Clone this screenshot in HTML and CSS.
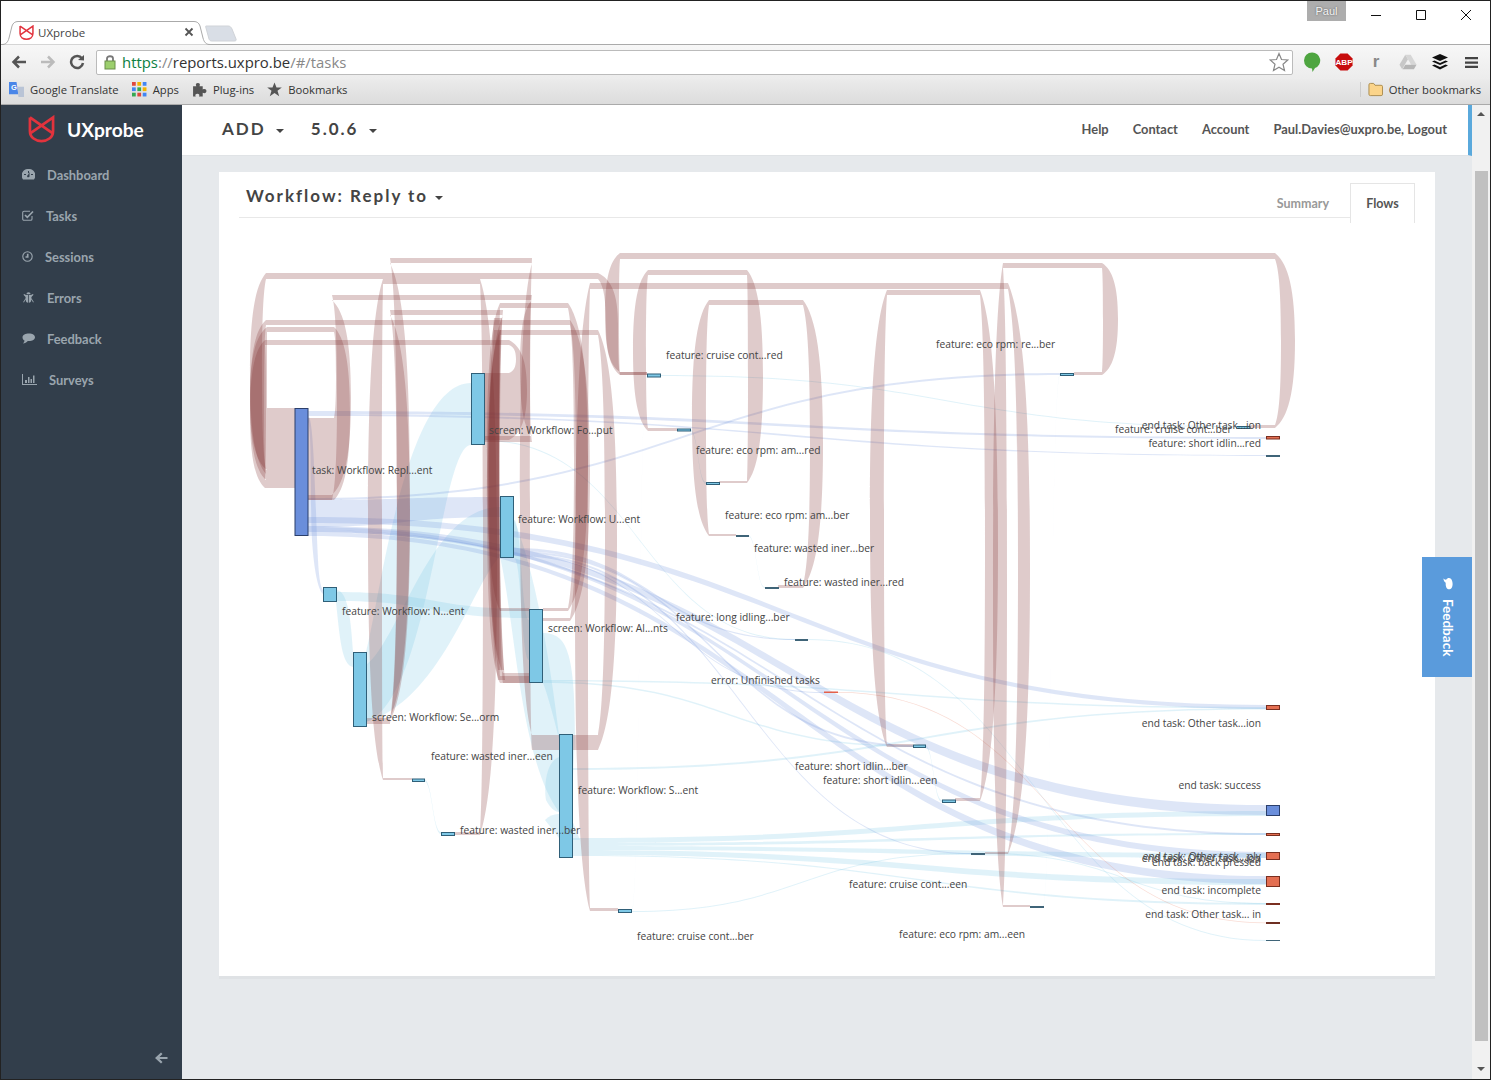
FILE: index.html
```html
<!DOCTYPE html>
<html lang="en">
  <head>
    <meta charset="UTF-8" />
    <title>UXprobe</title>
    <link rel="stylesheet" href="styles.css">
  </head>
  <body>
    <!-- browser frame -->
    <div class="titlebar">
      <div class="tab">
        <svg class="tab-shape" viewBox="0 0 208 24"><path d="M0 23.500C4 23.500 6 21 7 17L10 5C11 2 13 .5 16 .5H192C195 .5 197 2 198 5L201 17C202 21 204 23.500 208 23.500" /></svg>
        <svg class="tab-logo" viewBox="0 0 28 28"><path d="M2 2V16C2 23 8 26.500 14 26.500S26 23 26 16V2L3 18M2 2L25 18" /></svg>
        <span class="tab-title">UXprobe</span>
        <svg class="tab-close" viewBox="0 0 10 10"><path d="M1.500 1.500L8.500 8.500M8.500 1.500L1.500 8.500" /></svg>
      </div>
      <svg class="new-tab" viewBox="0 0 32 17"><path d="M1 1H23C25 1 26 2 27 4L31 14C31.500 15.500 31 16 29 16H7C5 16 4.500 15 4 14L1 3C.5 1.500 .5 1 1 1Z" /></svg>
      <div class="spacer"></div>
      <div class="profile">Paul</div>
      <div class="win-controls">
        <svg viewBox="0 0 12 12"><path d="M1 6.500H11" /></svg>
        <svg viewBox="0 0 12 12"><path d="M1.500 1.500H10.500V10.500H1.500Z" /></svg>
        <svg viewBox="0 0 12 12"><path d="M1 1L11 11M11 1L1 11" /></svg>
      </div>
    </div>

    <div class="toolbar">
      <svg class="nav-icon" viewBox="0 0 16 14"><path d="M15 7H3M8 1.500L2.500 7L8 12.500" /></svg>
      <svg class="nav-icon is-off" viewBox="0 0 16 14"><path d="M1 7H13M8 1.500L13.500 7L8 12.500" /></svg>
      <svg class="nav-reload" viewBox="0 0 16 16"><path d="M13 4.500A6 6 0 1 0 14 9" /><path class="fill" d="M9 6L15 6.500V1Z" /></svg>
      <div class="omnibox">
        <svg class="lock" viewBox="0 0 12 16"><path class="shackle" d="M3 7V4.500C3 1.500 9 1.500 9 4.500V7" /><rect x="1" y="7" width="10" height="8" /></svg>
        <span class="url"><span class="url-scheme">https</span><span class="url-dim">://</span><span class="url-host">reports.uxpro.be</span><span class="url-dim">/#/tasks</span></span>
        <svg class="star-outline" viewBox="0 0 20 20"><path d="M10 1.500L12.500 7.500L18.800 8L14 12.200L15.500 18.500L10 15.200L4.500 18.500L6 12.200L1.200 8L7.500 7.500Z" /></svg>
      </div>
      <div class="extensions">
        <svg class="ext-tall" viewBox="0 0 18 21"><path class="ext-hangouts" d="M9 .5A8 8 0 0 1 12 16L9.500 20L9 16.500A8 8 0 0 1 9 .5Z" /></svg>
        <svg viewBox="0 0 20 20"><path class="ext-abp" d="M6 .5H14L19.500 6V14L14 19.500H6L.5 14V6Z" /><text class="ext-abp-text" x="10" y="13.500">ABP</text></svg>
        <span class="ext-r">r</span>
        <svg viewBox="0 0 20 18"><path class="ext-drive-a" d="M7 1L.5 12L3.500 17L10 6Z" /><path class="ext-drive-b" d="M7 1H13L19.500 12H13.500Z" /><path class="ext-drive-c" d="M4 17L7 12H19.500L16.500 17Z" /></svg>
        <svg viewBox="0 0 18 18"><path class="ext-buffer" d="M9 1L17 4.500L9 8L1 4.500Z M1 8.500L3.500 7.500L9 10L14.500 7.500L17 8.500L9 12Z M1 12.500L3.500 11.500L9 14L14.500 11.500L17 12.500L9 16.500Z" /></svg>
        <svg viewBox="0 0 14 14"><path class="ext-menu" d="M0 1H14V3.500H0Z M0 5.800H14V8.300H0Z M0 10.500H14V13H0Z" /></svg>
      </div>
    </div>

    <div class="bookmarks">
      <div class="bookmark">
        <svg class="bm-icon" viewBox="0 0 16 16"><path class="bm-translate" d="M0 0H8L10 13H0Z" /><path class="bm-translate-b" d="M9 5H16V16H10Z" /><text class="bm-g" x="2" y="9">G</text></svg>
        Google Translate
      </div>
      <div class="bookmark">
        <svg class="bm-icon" viewBox="0 0 14 14">
          <rect class="d1" x="0" y="0" width="3.500" height="3.500" /><rect class="d2" x="5" y="0" width="3.500" height="3.500" /><rect class="d3" x="10" y="0" width="3.500" height="3.500" />
          <rect class="d3" x="0" y="5" width="3.500" height="3.500" /><rect class="d4" x="5" y="5" width="3.500" height="3.500" /><rect class="d2" x="10" y="5" width="3.500" height="3.500" />
          <rect class="d4" x="0" y="10" width="3.500" height="3.500" /><rect class="d1" x="5" y="10" width="3.500" height="3.500" /><rect class="d3" x="10" y="10" width="3.500" height="3.500" />
        </svg>
        Apps
      </div>
      <div class="bookmark">
        <svg class="bm-icon" viewBox="0 0 14 14"><path class="bm-dark" d="M1 4H4C3 2 4 1 5.500 1S8 2 7 4H10V7C12 6 13.500 7 13.500 8.500S12 11 10 10V13.500H6.500C7.500 12 6.500 11 5 11S2.500 12 3.500 13.500H1Z" /></svg>
        Plug-ins
      </div>
      <div class="bookmark">
        <svg class="bm-icon" viewBox="0 0 15 14"><path class="bm-dark" d="M7.500 0L9.500 5H14.800L10.500 8.300L12.200 13.800L7.500 10.500L2.800 13.800L4.500 8.300L.2 5H5.500Z" /></svg>
        Bookmarks
      </div>
      <div class="spacer"></div>
      <div class="bookmark other">
        <svg class="bm-icon" viewBox="0 0 16 14"><path class="bm-folder" d="M1 2C1 1 1.500 .5 2.500 .5H6L7.500 2.500H14C15 2.500 15.500 3 15.500 4V12C15.500 13 15 13.500 14 13.500H2.500C1.500 13.500 1 13 1 12Z" /></svg>
        Other bookmarks
      </div>
    </div>

    <div class="app">
      <aside class="sidebar">
        <div class="brand">
          <svg class="brand-logo" viewBox="0 0 28 28"><path d="M2 2V16C2 23 8 26.500 14 26.500S26 23 26 16V2L3 18M2 2L25 18" /></svg>
          <span class="brand-name">UXprobe</span>
        </div>
        <nav class="side-nav">
          <a class="side-link">
            <svg class="w13" viewBox="0 0 13 11"><path d="M6.500 0A6.500 6.500 0 0 0 1 10.500H12A6.500 6.500 0 0 0 6.500 0ZM6 2H7V4H6ZM2 5H4V6H2ZM9 5H11V6H9ZM6 6L7.500 3L7.500 7A1.200 1.200 0 1 1 6 6Z" fill-rule="evenodd" /></svg>
            Dashboard
          </a>
          <a class="side-link">
            <svg class="w12 line" viewBox="0 0 12 11"><path d="M10 6V9C10 9.800 9.500 10.300 8.700 10.300H2C1.200 10.300 .7 9.800 .7 9V2.500C.7 1.700 1.200 1.200 2 1.200H8" /><path class="thick" d="M3 5L5.300 7.300L11 1.500" /></svg>
            Tasks
          </a>
          <a class="side-link">
            <svg class="w11 line" viewBox="0 0 11 11"><circle cx="5.500" cy="5.500" r="4.700" /><path class="thick" d="M5.700 2.800V6H3.500" /></svg>
            Sessions
          </a>
          <a class="side-link">
            <svg class="w13" viewBox="0 0 13 12"><path d="M4.200 2.500A2.300 2.300 0 0 1 8.800 2.500ZM3.800 3.300H6.100V11.800C4.500 11.700 3.500 10.500 3.500 8.500V8L1.500 11.500L.7 11L3.300 6.800V5.500L1 3L1.700 2.300ZM6.900 3.300H9.200L11.300 2.300L12 3L9.700 5.500V6.800L12.300 11L11.500 11.500L9.500 8V8.500C9.500 10.500 8.500 11.700 6.900 11.800Z" /></svg>
            Errors
          </a>
          <a class="side-link">
            <svg class="w13" viewBox="0 0 13 11"><path d="M7 .5C10.300 .5 13 2 13 4.300S10.300 8 7 8H5.800C4.500 9.500 2.800 10.300 1 10.500C2 9.500 2.500 8.500 2.500 7.500C1 7 .5 5.500 .5 4.300C.5 2 3.500 .5 7 .5Z" /></svg>
            Feedback
          </a>
          <a class="side-link">
            <svg class="w15" viewBox="0 0 15 11"><path d="M0 0H1V10H15V11H0ZM3 6H5V9H3ZM6 3H7.500V9H6ZM8.500 5H10V9H8.500ZM11 1.500H12.500V9H11Z" /></svg>
            Surveys
          </a>
        </nav>
        <div class="side-foot">
          <svg viewBox="0 0 14 12"><path d="M13.500 5H5.500L8.500 2L7 .5L1 6L7 11.500L8.500 10L5.500 7H13.500Z" /></svg>
        </div>
      </aside>

      <main class="main">
        <header class="topbar">
          <div class="crumb">ADD <span class="caret"></span></div>
          <div class="crumb">5.0.6 <span class="caret"></span></div>
          <div class="spacer"></div>
          <a class="top-link">Help</a>
          <a class="top-link">Contact</a>
          <a class="top-link">Account</a>
          <a class="top-link">Paul.Davies@uxpro.be, Logout</a>
        </header>

        <div class="content">
          <section class="card">
            <div class="card-head">
              <h2 class="card-title">Workflow: Reply to <span class="caret"></span></h2>
              <div class="tabs">
                <a class="tab-link">Summary</a>
                <a class="tab-link is-active">Flows</a>
              </div>
            </div>

            <svg class="sankey" viewBox="219 218 1216 758">
              <g id="links"></g>
              <g class="nodes">
                <rect class="n-blue" x="295" y="408.500" width="13" height="127" />
                <rect class="n-sky" x="471.500" y="373.500" width="13" height="71" />
                <rect class="n-sky" x="500.500" y="496.500" width="13" height="61" />
                <rect class="n-sky" x="323.500" y="587.500" width="13" height="14" />
                <rect class="n-sky" x="353.500" y="652.500" width="13" height="74" />
                <rect class="n-sky" x="529.500" y="609.500" width="13" height="73" />
                <rect class="n-sky" x="559.500" y="734.500" width="13" height="123" />
                <rect class="n-sky" x="647.500" y="374" width="13" height="3" />
                <rect class="n-sky" x="618.500" y="909.500" width="13" height="3" />
                <rect class="n-sky" x="412.500" y="779" width="12" height="2.500" />
                <rect class="n-sky" x="441.500" y="832.500" width="13" height="3" />
                <rect class="n-sky" x="677.500" y="429" width="13" height="2" />
                <rect class="n-sky" x="706.500" y="482.500" width="13" height="2" />
                <rect class="n-flat" x="736" y="535" width="13" height="2" />
                <rect class="n-flat" x="765" y="587" width="14" height="2" />
                <rect class="n-flat" x="795" y="639" width="13" height="2" />
                <rect class="n-error" x="824" y="691.500" width="14" height="1.500" />
                <rect class="n-sky" x="913.500" y="745" width="12" height="2.500" />
                <rect class="n-sky" x="942.500" y="800" width="13" height="2.500" />
                <rect class="n-flat" x="971" y="853" width="14" height="2" />
                <rect class="n-flat" x="1030" y="906" width="14" height="2" />
                <rect class="n-sky" x="1060.500" y="373.500" width="13" height="2" />
                <rect class="n-sky" x="1237" y="426.500" width="13" height="2" />
                <rect class="n-red" x="1266.500" y="436.500" width="13" height="2.500" />
                <rect class="n-flat" x="1266" y="455" width="14" height="2" />
                <rect class="n-red" x="1266.500" y="705.500" width="13" height="4" />
                <rect class="n-blue" x="1266.500" y="805.500" width="13" height="10" />
                <rect class="n-red" x="1266.500" y="833.500" width="13" height="2" />
                <rect class="n-red" x="1266.500" y="852.500" width="13" height="7" />
                <rect class="n-red" x="1266.500" y="876.500" width="13" height="10" />
                <rect class="n-red" x="1266.500" y="903.500" width="13" height="1" />
                <rect class="n-brown" x="1266" y="922" width="14" height="2" />
                <rect class="n-flat" x="1266" y="940" width="14" height="1" />
              </g>
              <g class="labels">
                <text x="312" y="474">task: Workflow: Repl...ent</text>
                <text x="489" y="434">screen: Workflow: Fo...put</text>
                <text x="518" y="523">feature: Workflow: U...ent</text>
                <text x="342" y="615">feature: Workflow: N...ent</text>
                <text x="372" y="721">screen: Workflow: Se...orm</text>
                <text x="548" y="632">screen: Workflow: Al...nts</text>
                <text x="578" y="794">feature: Workflow: S...ent</text>
                <text x="431" y="760">feature: wasted iner...een</text>
                <text x="460" y="834">feature: wasted iner...ber</text>
                <text x="666" y="359">feature: cruise cont...red</text>
                <text x="637" y="940">feature: cruise cont...ber</text>
                <text x="696" y="454">feature: eco rpm: am...red</text>
                <text x="725" y="519">feature: eco rpm: am...ber</text>
                <text x="754" y="552">feature: wasted iner...ber</text>
                <text x="784" y="586">feature: wasted iner...red</text>
                <text x="676" y="621">feature: long idling...ber</text>
                <text x="711" y="684">error: Unfinished tasks</text>
                <text x="795" y="770">feature: short idlin...ber</text>
                <text x="823" y="784">feature: short idlin...een</text>
                <text x="849" y="888">feature: cruise cont...een</text>
                <text x="899" y="938">feature: eco rpm: am...een</text>
                <text x="936" y="348">feature: eco rpm: re...ber</text>
                <text x="1115" y="433">feature: cruise cont...ber</text>
                <text class="to-left" x="1261" y="429">end task: Other task...ion</text>
                <text class="to-left" x="1261" y="447">feature: short idlin...red</text>
                <text class="to-left" x="1261" y="727">end task: Other task...ion</text>
                <text class="to-left" x="1261" y="789">end task: success</text>
                <text class="to-left" x="1261" y="860">end task: Other task...ply</text>
                <text class="to-left" x="1261" y="862">end task: Other task...ion</text>
                <text class="to-left" x="1261" y="866">end task: back pressed</text>
                <text class="to-left" x="1261" y="894">end task: incomplete</text>
                <text class="to-left" x="1261" y="918">end task: Other task... in</text>
              </g>
            </svg>
          </section>
        </div>

        <a class="feedback-tab">
          <svg viewBox="0 0 13 11"><path d="M7 .5C10.300 .5 13 2 13 4.300S10.300 8 7 8H5.800C4.500 9.500 2.800 10.300 1 10.500C2 9.500 2.500 8.500 2.500 7.500C1 7 .5 5.500 .5 4.300C.5 2 3.500 .5 7 .5Z" /></svg>
          <span>Feedback</span>
        </a>
      </main>

      <div class="scrollbar">
        <span class="sb-up"></span>
        <div class="sb-thumb"></div>
        <span class="sb-down"></span>
      </div>
    </div>
    <script src="sankey.js"></script>
  </body>
</html>
```

FILE: styles.css
```css
* {
  box-sizing: border-box;
  padding: 0;
  margin: 0;
}

html,
body {
  width: 1491px;
  height: 1080px;
  overflow: hidden;
}

body {
  display: flex;
  flex-direction: column;
  font-family: "Lato", sans-serif;
  background-color: #fff;
  border: 1px solid #222;
}

.spacer {
  flex-grow: 1;
}

/* browser frame */

.titlebar {
  display: flex;
  align-items: flex-end;
  height: 44px;
  flex-shrink: 0;
  border-bottom: 1px solid #aaa;
  background-color: #fff;
}

.tab {
  position: relative;
  display: flex;
  align-items: center;
  width: 208px;
  height: 24px;
  margin-left: 1px;
  margin-bottom: -1px;
  padding-left: 17px;
  padding-bottom: 2px;
  font-family: "Open Sans", sans-serif;
  font-size: 11.500px;
  color: #444;
}

.tab-shape {
  position: absolute;
  left: 0;
  top: 0;
  width: 208px;
  height: 24px;
}

.tab-shape path {
  fill: #fff;
  stroke: #aaa;
}

.tab-logo {
  position: relative;
  width: 15px;
  height: 15px;
  margin-right: 4px;
}

.tab-logo path,
.brand-logo path {
  fill: none;
  stroke: #e2333d;
  stroke-width: 2.800;
}

.tab-title {
  position: relative;
  flex-grow: 1;
}

.tab-close {
  position: relative;
  width: 10px;
  height: 10px;
  margin-right: 16px;
}

.tab-close path {
  fill: none;
  stroke: #555;
  stroke-width: 1.800;
}

.new-tab {
  width: 32px;
  height: 17px;
  margin-bottom: 2px;
  margin-left: -5px;
}

.new-tab path {
  fill: #d9dee6;
  stroke: #d0d3d8;
}

.profile {
  align-self: flex-start;
  width: 39px;
  height: 20px;
  line-height: 20px;
  text-align: center;
  font-family: "Liberation Sans", sans-serif;
  font-size: 11px;
  color: #f4f4f4;
  background-color: #adadad;
  text-shadow: 0 0 2px #555;
}

.win-controls {
  align-self: flex-start;
  display: flex;
  width: 144px;
}

.win-controls svg {
  width: 12px;
  height: 12px;
  margin-top: 8px;
  margin-left: 24px;
  margin-right: 10px;
  fill: none;
  stroke: #111;
  stroke-width: 1;
}

.win-controls svg + svg {
  margin-left: 23px;
}

.toolbar {
  display: flex;
  align-items: center;
  height: 34px;
  flex-shrink: 0;
  padding-left: 10px;
  background: linear-gradient(#f7f7f7, #ececec);
}

.nav-icon {
  width: 16px;
  height: 14px;
  margin-right: 13px;
  fill: none;
  stroke: #555;
  stroke-width: 2.500;
}

.nav-icon.is-off {
  stroke: #bbb;
}

.nav-reload {
  width: 16px;
  height: 16px;
  margin-right: 11px;
  fill: none;
  stroke: #555;
  stroke-width: 2.500;
}

.nav-reload .fill {
  fill: #555;
  stroke: none;
}

.omnibox {
  display: flex;
  align-items: center;
  width: 1197px;
  height: 25px;
  padding: 0 3px 0 7px;
  background-color: #fff;
  border: 1px solid #bbb;
  border-radius: 2px;
}

.lock {
  width: 12px;
  height: 16px;
  margin-right: 6px;
}

.lock rect {
  fill: #9ccf6d;
  stroke: #6b8f4a;
}

.lock .shackle {
  fill: none;
  stroke: #777;
  stroke-width: 1.800;
}

.url {
  flex-grow: 1;
  font-family: "Open Sans", sans-serif;
  font-size: 14.900px;
}

.url-scheme {
  color: #0b8043;
}

.url-dim {
  color: #888;
}

.url-host {
  color: #333;
}

.star-outline {
  width: 20px;
  height: 20px;
  fill: #fff;
  stroke: #888;
  stroke-width: 1.200;
}

.extensions {
  display: flex;
  align-items: center;
  width: 196px;
  padding-left: 10px;
  gap: 14px;
}

.extensions svg {
  width: 18px;
  height: 18px;
}

.extensions .ext-tall {
  height: 21px;
}

.extensions svg:last-child {
  width: 13px;
  height: 13px;
  margin-left: 2px;
}

.ext-hangouts {
  fill: #4ea540;
}

.ext-abp {
  fill: #c70d0d;
}

.ext-abp-text {
  font-family: "Liberation Sans", sans-serif;
  font-size: 9px;
  font-weight: bold;
  text-anchor: middle;
  fill: #fff;
}

.ext-r {
  width: 18px;
  text-align: center;
  font-family: "Liberation Sans", sans-serif;
  font-size: 17px;
  font-weight: bold;
  color: #888;
}

.ext-drive-a {
  fill: #c8c8c8;
}

.ext-drive-b {
  fill: #d6d6d6;
}

.ext-drive-c {
  fill: #b6b6b6;
}

.ext-buffer {
  fill: #111;
}

.ext-menu {
  fill: #444;
}

.bookmarks {
  display: flex;
  align-items: center;
  height: 26px;
  flex-shrink: 0;
  padding: 0 9px 4px 8px;
  gap: 13px;
  font-family: "Open Sans", sans-serif;
  font-size: 11.250px;
  color: #333;
  background: linear-gradient(#ebebeb, #dcdcdc);
  border-bottom: 1px solid #aaa;
}

.bookmark {
  display: flex;
  align-items: center;
  gap: 6px;
}

.bookmark.other {
  padding-left: 7px;
  border-left: 1px solid #ccc;
}

.bm-icon {
  width: 15px;
  height: 15px;
}

.bm-translate {
  fill: #4a86e8;
}

.bm-translate-b {
  fill: #b9c4d6;
}

.bm-g {
  font-family: "Liberation Sans", sans-serif;
  font-size: 8px;
  font-weight: bold;
  fill: #fff;
}

.d1 {
  fill: #e0483e;
}

.d2 {
  fill: #f4b400;
}

.d3 {
  fill: #4285f4;
}

.d4 {
  fill: #34a853;
}

.bm-dark {
  fill: #555;
}

.bm-folder {
  fill: #fbd48a;
  stroke: #a98a4c;
}

/* app */

.app {
  display: flex;
  flex-grow: 1;
  min-height: 0;
}

.sidebar {
  display: flex;
  flex-direction: column;
  width: 181px;
  flex-shrink: 0;
  background-color: #323e4b;
}

.brand {
  display: flex;
  align-items: center;
  height: 49px;
  padding-left: 27px;
  padding-bottom: 1px;
  gap: 12px;
}

.brand-logo {
  width: 27px;
  height: 28px;
}

.brand-name {
  font-size: 19.200px;
  font-weight: bold;
  color: #fff;
}

.side-nav {
  flex-grow: 1;
}

.side-link {
  display: flex;
  align-items: center;
  height: 41px;
  padding-left: 21px;
  gap: 12px;
  font-size: 12.900px;
  font-weight: bold;
  color: #9aa5ae;
}

.side-link svg {
  height: 11px;
  fill: #9aa5ae;
}

.side-link svg.line {
  fill: none;
  stroke: #9aa5ae;
  stroke-width: 1.100;
}

.side-link .thick {
  stroke-width: 1.700;
}

.w11 {
  width: 11px;
}

.w12 {
  width: 12px;
}

.w13 {
  width: 13px;
}

.w15 {
  width: 15px;
}

.side-foot {
  height: 27px;
  padding-left: 153px;
}

.side-foot svg {
  display: block;
  width: 14px;
  height: 12px;
  fill: #9aa5ae;
}

.main {
  position: relative;
  display: flex;
  flex-direction: column;
  flex-grow: 1;
  min-width: 0;
  background-color: #e6e9ec;
}

.topbar {
  display: flex;
  align-items: center;
  height: 51px;
  flex-shrink: 0;
  padding-left: 40px;
  padding-right: 21px;
  padding-bottom: 3px;
  background-color: #fff;
  border-bottom: 1px solid #e0e3e6;
  border-right: 4px solid #5aa9dc;
}

.crumb {
  margin-right: 27px;
  font-size: 17px;
  font-weight: bold;
  letter-spacing: 2px;
  color: #444;
}

.caret {
  display: inline-block;
  width: 0;
  height: 0;
  margin-left: 4px;
  vertical-align: middle;
  border-top: 4px solid #444;
  border-left: 4px solid transparent;
  border-right: 4px solid transparent;
}

.top-link {
  margin-left: 24px;
  font-size: 12.870px;
  font-weight: bold;
  color: #555;
}

.content {
  flex-grow: 1;
  min-height: 0;
  padding: 16px 37px 0;
}

.card {
  width: 1216px;
  height: 807px;
  background-color: #fff;
  border-bottom: 3px solid #dfe2e5;
}

.card-head {
  display: flex;
  justify-content: space-between;
  height: 46px;
  margin: 0 20px;
  padding-left: 7px;
  border-bottom: 1px solid #e8e8e8;
}

.card-title {
  margin-top: 13px;
  font-size: 17px;
  font-weight: bold;
  letter-spacing: 2px;
  color: #444;
}

.card-title .caret {
  margin-left: 1px;
}

.tabs {
  position: relative;
  display: flex;
  align-items: flex-start;
  margin-top: 11px;
}

.tab-link {
  height: 40px;
  line-height: 42px;
  font-size: 12.500px;
  font-weight: bold;
  color: #999;
}

.tab-link.is-active {
  width: 65px;
  margin-left: 21px;
  text-align: center;
  color: #555;
  background-color: #fff;
  border: 1px solid #e5e5e5;
  border-bottom: none;
  line-height: 40px;
}

.sankey {
  display: block;
  width: 1216px;
  height: 758px;
}

.l-red {
  fill: rgba(128, 48, 48, 0.25);
}

.l-blue {
  fill: rgba(106, 142, 219, 0.22);
}

.l-sky {
  fill: rgba(126, 200, 230, 0.24);
}

.l-error {
  fill: rgba(230, 110, 80, 0.25);
}

.nodes rect {
  stroke-width: 1;
}

.n-blue {
  fill: #6a8edb;
  stroke: #2b3f6b;
}

.n-sky {
  fill: #7ec8e6;
  stroke: #2f5f78;
}

.n-flat {
  fill: #3f6478;
}

.n-red {
  fill: #e46f52;
  stroke: #7a2f20;
}

.n-error {
  fill: #e4604a;
}

.n-brown {
  fill: #6e2f22;
}

.labels text {
  font-family: "Open Sans", sans-serif;
  font-size: 10.250px;
  fill: #444;
}

.labels .to-left {
  text-anchor: end;
}

.feedback-tab {
  position: absolute;
  top: 452px;
  right: 0;
  display: flex;
  flex-direction: column;
  align-items: center;
  width: 50px;
  height: 120px;
  padding-top: 21px;
  padding-left: 1px;
  gap: 10px;
  background-color: #5a9bdc;
}

.feedback-tab svg {
  width: 12px;
  height: 11px;
  fill: #fff;
  transform: rotate(90deg);
}

.feedback-tab span {
  writing-mode: vertical-rl;
  font-size: 13.500px;
  font-weight: bold;
  color: #fff;
}

.scrollbar {
  display: flex;
  flex-direction: column;
  align-items: center;
  width: 18px;
  flex-shrink: 0;
  background-color: #f1f1f1;
}

.sb-up,
.sb-down {
  width: 0;
  height: 0;
  border-left: 4px solid transparent;
  border-right: 4px solid transparent;
}

.sb-up {
  margin-top: 7px;
  border-bottom: 4px solid #555;
}

.sb-down {
  margin-top: 26px;
  border-top: 4px solid #555;
}

.sb-thumb {
  width: 13px;
  height: 870px;
  margin-top: 55px;
  background-color: #c0c0c0;
}
```

FILE: sankey.js
```js
var linkGroup = document.getElementById("links");

function addLink(d, cls) {
  var path = document.createElementNS("http://www.w3.org/2000/svg", "path");
  path.setAttribute("d", d);
  path.setAttribute("class", cls);
  linkGroup.appendChild(path);
}

// plain forward link: left end y0a-y0b, right end y1a-y1b
function ribbon(r, cls) {
  var x0 = r[0], y0a = r[1], y0b = r[2], x1 = r[3], y1a = r[4], y1b = r[5];
  var xm = (x0 + x1) / 2;
  addLink(
    `M${x0} ${y0a}C${xm} ${y0a} ${xm} ${y1a} ${x1} ${y1a}` +
      `L${x1} ${y1b}C${xm} ${y1b} ${xm} ${y0b} ${x0} ${y0b}Z`,
    cls
  );
}

// one side of a loop, from (xa, ya) round the bulge at x to (xb, yb)
function bulge(x, xa, ya, xb, yb) {
  var h = yb - ya;
  var mid = (ya + yb) / 2;
  return (
    `C${x + (xa - x) * 0.35} ${ya + h * 0.06} ${x} ${ya + h * 0.2} ${x} ${mid}` +
    `C${x} ${yb - h * 0.2} ${x + (xb - x) * 0.35} ${yb - h * 0.06} ${xb} ${yb}`
  );
}

// circular link: rail on top, a column either side, ends running to the nodes
function loop(l) {
  var left = l.xl + l.cl, right = l.xr - l.cr;
  var rightEnd = l.crb === undefined ? right : l.xr - l.crb;
  var top = l.top, low = l.top + l.t;
  var d = `M${l.lx} ${l.ly[1]}L${left} ${l.ly[1]}`;
  d += bulge(l.xl, left, l.ly[1], left, top);
  d += `L${right} ${top}`;
  d += bulge(l.xr, right, top, rightEnd, l.ry[1]);
  d += `L${l.rx} ${l.ry[1]}L${l.rx} ${l.ry[0]}L${rightEnd} ${l.ry[0]}`;
  d += bulge(l.xr - l.wr, rightEnd, l.ry[0], right, low);
  d += `L${left} ${low}`;
  d += bulge(l.xl + l.wl, left, low, left, l.ly[0]);
  d += `L${l.lx} ${l.ly[0]}Z`;
  addLink(d, "l-red");
}

var sky = [
  [336, 592, 601, 529, 609, 618],
  [514, 520, 558, 529, 620, 660],
  [572, 838, 843, 1266, 811, 816],
  [572, 843, 846, 1266, 833, 835],
  [572, 846, 850, 1266, 853, 858],
  [572, 850, 855, 1266, 879, 885],
  [572, 855, 856, 1266, 903, 905],
  [572, 768, 770, 1266, 708, 709.500],
  [632, 911, 912, 971, 853, 854],
  [543, 680, 681.500, 1266, 707, 708.500],
  [543, 681.500, 683, 913, 745.500, 747],
  [660, 375, 376, 1237, 426, 427],
  [424, 779, 781, 441, 832, 834],
  [690, 429, 431, 706, 482, 484],
  [748, 535, 536, 765, 587, 588],
  [925, 745, 747, 942, 800, 802],
  [808, 639, 640, 1266, 940, 941],
  [985, 853, 854, 1266, 903, 904],
  [484, 440, 441, 795, 639, 640],
  [647, 376, 377, 632, 910, 911],
  [1060, 374, 375, 1043, 906, 907]
];

// the wide screen-to-screen links do not follow the plain curve
var skyShapes = [
  "M366 652C380 600 405 383 471 383L471 445C440 445 430 700 366 722Z",
  "M366 665C400 640 430 507 500 507L500 556C470 590 440 700 366 722Z",
  "M336 590C348 590 351 620 353 652L353 667C342 665 340 640 336 602Z",
  "M500 557C515 620 520 760 559 812L559 735C550 660 535 570 514 520Z",
  "M543 633C566 633 575 650 575 735L572 800C565 760 550 700 543 683Z",
  "M559 757C545 762 544 790 546 800C550 808 555 812 559 812Z",
  "M545 820C552 812 565 812 572 820L580 840L572 840L559 838Z"
];

var blue = [
  [308, 500, 527, 500, 497, 517],
  [308, 411, 414, 1266, 437, 439],
  [308, 414, 416, 1266, 455, 456],
  [308, 498, 500, 1060, 373, 375],
  [308, 517, 523, 1266, 705, 709],
  [308, 526, 532, 1266, 805, 815],
  [308, 532, 536, 1266, 876, 884],
  [308, 527, 530, 1266, 852, 858],
  [308, 530, 532, 1266, 833, 835],
  [514, 548, 551, 795, 639, 640],
  [514, 551, 553, 913, 745, 747],
  [514, 553, 555, 971, 853, 854],
  [514, 555, 556, 824, 692, 693]
];

var loops = [
  { xl: 250, wl: 17, cl: 17, xr: 350, wr: 14, cr: 16, top: 327, t: 5, lx: 295, ly: [408, 470], rx: 308, ry: [418, 500] },
  { xl: 250, wl: 12, cl: 16, xr: 618, wr: 12, cr: 20, crb: -2, top: 273, t: 6, lx: 295, ly: [470, 474], rx: 647, ry: [372, 375] },
  { xl: 250, wl: 14, cl: 16, xr: 590, wr: 14, cr: 20, top: 320, t: 5, lx: 295, ly: [474, 480], rx: 543, ry: [618, 621] },
  { xl: 250, wl: 16, cl: 15, xr: 527, wr: 11, cr: 18, top: 340, t: 5, lx: 295, ly: [480, 488], rx: 484, ry: [373, 440] },
  { xl: 337, wl: 14, cl: -5, xr: 530, wr: 10, cr: -2, top: 295, t: 5, lx: 308, ly: [495, 500], rx: 484, ry: [436, 442] },
  { xl: 397, wl: 13, cl: -7, xr: 530, wr: 10, cr: -2, top: 258, t: 5, lx: 366, ly: [718, 721], rx: 559, ry: [735, 750] },
  { xl: 397, wl: 13, cl: -7, xr: 500, wr: 12, cr: -3, top: 310, t: 5, lx: 366, ly: [721, 724], rx: 529, ry: [673, 683] },
  { xl: 368, wl: 14, cl: 15, xr: 497, wr: 14, cr: 17, top: 279, t: 5, lx: 412, ly: [778, 780], rx: 455, ry: [832, 835] },
  { xl: 487, wl: 12, cl: 13, xr: 588, wr: 14, cr: 20, top: 303, t: 5, lx: 529, ly: [608, 611], rx: 543, ry: [608, 611] },
  { xl: 487, wl: 12, cl: 13, xr: 617, wr: 12, cr: 19, top: 330, t: 5, lx: 529, ly: [676, 683], rx: 572, ry: [735, 750] },
  { xl: 575, wl: 13, cl: 15, xr: 1030, wr: 12, cr: 22, top: 283, t: 6, lx: 618, ly: [908, 911], rx: 985, ry: [852, 854] },
  { xl: 605, wl: 14, cl: 15, xr: 1295, wr: 14, cr: 20, top: 253, t: 6, lx: 647, ly: [372, 375], rx: 1250, ry: [425, 428] },
  { xl: 633, wl: 13, cl: 15, xr: 763, wr: 15, cr: 16, top: 270, t: 5, lx: 677, ly: [428, 431], rx: 719, ry: [481, 483] },
  { xl: 692, wl: 14, cl: 17, xr: 823, wr: 13, cr: 20, top: 300, t: 5, lx: 736, ly: [534, 536], rx: 778, ry: [585, 588] },
  { xl: 870, wl: 14, cl: 17, xr: 998, wr: 13, cr: 18, top: 290, t: 5, lx: 913, ly: [744, 747], rx: 955, ry: [798, 801] },
  { xl: 993, wl: 14, cl: 10, xr: 1118, wr: 15, cr: 16, top: 263, t: 5, lx: 1030, ly: [905, 907], rx: 1074, ry: [372, 375] }
];

// extra weight where several loops run on top of each other
var redShapes = [
  "M494 318C486 400 486 600 498 680L505 680C498 600 498 400 502 318Z",
  "M494 330C487 420 487 590 498 670L504 670C498 590 498 420 501 330Z"
];

skyShapes.forEach(function (d) {
  addLink(d, "l-sky");
});
sky.forEach(function (r) {
  ribbon(r, "l-sky");
});
addLink("M308 416C314 416 315 500 318 560C319 580 321 588 323 590L323 594C318 590 314 570 312 540C310 500 312 430 308 422Z", "l-blue");
blue.forEach(function (r) {
  ribbon(r, "l-blue");
});
ribbon([838, 692, 692.800, 1266, 922.500, 923.300], "l-error");
loops.forEach(loop);
redShapes.forEach(function (d) {
  addLink(d, "l-red");
});
```
